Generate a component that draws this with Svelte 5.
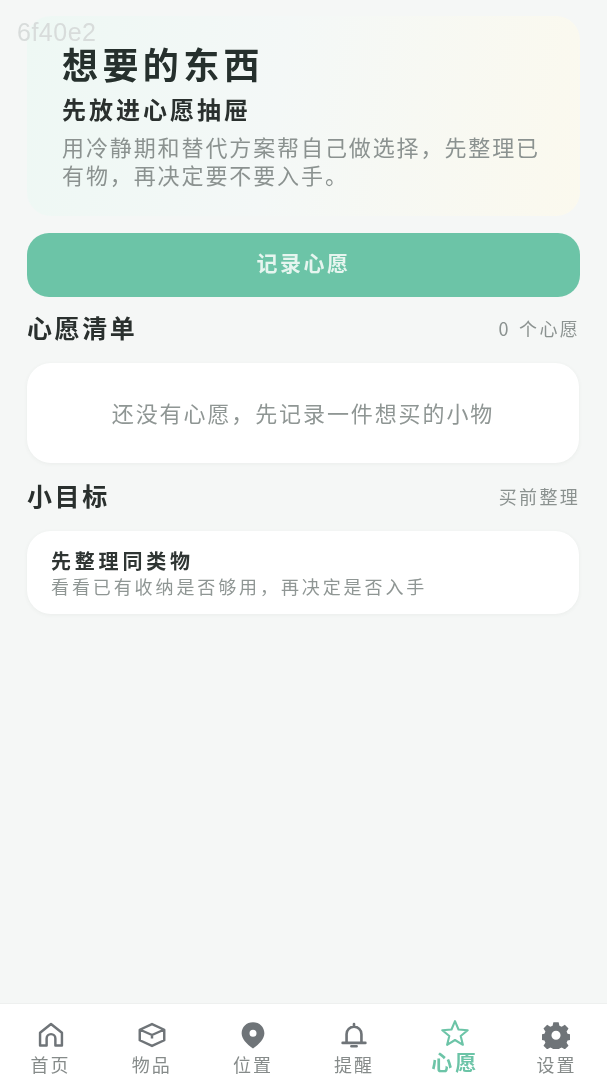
<script lang="ts">
  const tabs = [
    { id: 'home', label: '首页' },
    { id: 'items', label: '物品' },
    { id: 'place', label: '位置' },
    { id: 'bell', label: '提醒' },
    { id: 'wish', label: '心愿', active: true },
    { id: 'gear', label: '设置' }
  ];
</script>

<div class="page">
  <span class="build">6f40e2</span>

  <main class="content">
    <section class="hero">
      <h1>想要的东西</h1>
      <h2>先放进心愿抽屉</h2>
      <p>用冷静期和替代方案帮自己做选择，先整理已有物，再决定要不要入手。</p>
    </section>

    <button class="record">记录心愿</button>

    <div class="section-head first">
      <h3>心愿清单</h3>
      <span>0 个心愿</span>
    </div>
    <div class="card empty">还没有心愿，先记录一件想买的小物</div>

    <div class="section-head">
      <h3>小目标</h3>
      <span>买前整理</span>
    </div>
    <div class="card goal">
      <strong>先整理同类物</strong>
      <small>看看已有收纳是否够用，再决定是否入手</small>
    </div>
  </main>

  <nav class="tabbar">
    {#each tabs as tab}
      <div class="tab" class:active={tab.active}>
        <svg viewBox="0 0 32 32" width="32" height="32" aria-hidden="true">
          {#if tab.id === 'home'}
            <path d="M3.500 13.500 16 3.500l12.500 10V28H21V20a5 5 0 0 0-10 0v8H3.500Z" fill="none" stroke="currentColor" stroke-width="2.800" stroke-linejoin="round" />
          {:else if tab.id === 'items'}
            <path d="M16 3.500 30 10v12L16 28.500 2 22V10ZM2.500 10 16 16l13.500-6M16 16v4" fill="none" stroke="currentColor" stroke-width="2.800" stroke-linejoin="round" />
          {:else if tab.id === 'place'}
            <path fill-rule="evenodd" d="M16 1.500c7.500 0 13 5.500 13 12.500 0 6.500-5.500 12-13 17.500C8.500 26 3 20.500 3 14 3 7 8.500 1.500 16 1.500Zm0 8.500a4 4 0 1 0 0 8 4 4 0 0 0 0-8Z" fill="currentColor" />
          {:else if tab.id === 'bell'}
            <path d="M16 3.500v3M7.500 24.500V15a8.500 8.500 0 0 1 17 0v9.500M3 25h26M13 28.800h6" fill="none" stroke="currentColor" stroke-width="3" stroke-linecap="round" stroke-linejoin="round" />
          {:else if tab.id === 'wish'}
            <path d="M16 2.500 20 12 30.500 12.800 22.500 19.500 25 29.500 16 24 7 29.500 9.500 19.500 1.500 12.800 12 12Z" fill="none" stroke="currentColor" stroke-width="2.400" stroke-linejoin="round" />
          {:else}
            <path fill-rule="evenodd" d="M13 1.500h6l.9 4 2.600 1.100 3.600-2.200 4.200 4.200-2.200 3.400 1.100 2.500 4.300.9v6l-4.300.9-1.100 2.500 2.200 3.400-4.200 4.200-3.600-2.200-2.600 1.100-.9 4h-6l-.9-4-2.600-1.100-3.600 2.200-4.200-4.200 2.200-3.400-1.100-2.500-4.300-.9v-6l4.300-.9 1.100-2.500-2.200-3.400 4.200-4.200 3.600 2.200 2.600-1.100Zm3 9.500a5.200 5.200 0 1 0 0 10.400 5.200 5.200 0 0 0 0-10.400Z" fill="currentColor" />
          {/if}
        </svg>
        <span>{tab.label}</span>
      </div>
    {/each}
  </nav>
</div>

<style>
  :global(body) {
    margin: 0;
    background: #f5f7f6;
  }

  .page {
    position: relative;
    display: flex;
    flex-direction: column;
    min-height: 1080px;
    font-family: "Noto Sans CJK SC", "Noto Sans", sans-serif;
    color: #2a302e;
    overflow: hidden;
    filter: blur(0.6px);
  }

  .build {
    position: absolute;
    top: 20px;
    left: 17px;
    font-family: "Liberation Sans", sans-serif;
    font-size: 25px;
    line-height: 24px;
    letter-spacing: 0.5px;
    color: #d8dcdb;
  }

  .content {
    flex: 1;
    padding: 16px 27px 0;
  }

  .hero {
    height: 200px;
    box-sizing: border-box;
    padding: 27px 35px 0;
    border-radius: 24px;
    background: linear-gradient(100deg, #eef8f4 0%, #f4f8f7 45%, #fbf9ee 100%);
  }

  h1 {
    margin: 0;
    font-size: 36px;
    line-height: 40px;
    font-weight: 700;
    letter-spacing: 4.400px;
    color: #26302d;
  }

  h2 {
    margin: 11px 0 0;
    font-size: 24px;
    line-height: 30px;
    font-weight: 700;
    letter-spacing: 3px;
    color: #2a302e;
  }

  .hero p {
    margin: 8px 0 0;
    font-size: 22px;
    line-height: 28px;
    letter-spacing: 1.900px;
    color: #8b9290;
  }

  .record {
    display: block;
    width: 553px;
    height: 64px;
    margin-top: 17px;
    padding: 0 0 6px;
    border: 0;
    border-radius: 22px;
    background: #6cc4a7;
    color: #e6f5ef;
    font: inherit;
    font-size: 21px;
    font-weight: 700;
    letter-spacing: 2.500px;
  }

  .section-head {
    display: flex;
    align-items: center;
    justify-content: space-between;
    box-sizing: border-box;
    height: 34px;
    margin-top: 17px;
    padding-bottom: 3px;
  }

  .section-head.first {
    margin-top: 15px;
  }

  h3 {
    margin: 0;
    font-size: 25px;
    line-height: 31px;
    font-weight: 700;
    letter-spacing: 2.600px;
    color: #2a302e;
  }

  .section-head span {
    font-size: 18px;
    letter-spacing: 2.300px;
    word-spacing: 2px;
    color: #8b9290;
  }

  .card {
    box-sizing: border-box;
    width: 552px;
    margin-top: 17px;
    border-radius: 24px;
    background: #fff;
    box-shadow: 0 1px 4px rgba(60, 80, 70, 0.06);
  }

  .empty {
    display: flex;
    align-items: center;
    justify-content: center;
    height: 100px;
    padding-bottom: 2px;
    font-size: 22px;
    letter-spacing: 1.900px;
    color: #8f9694;
  }

  .goal {
    display: flex;
    flex-direction: column;
    height: 83px;
    padding: 18px 24px 0;
  }

  .goal strong {
    font-size: 20px;
    line-height: 24px;
    font-weight: 700;
    letter-spacing: 3.800px;
    color: #2f3533;
  }

  .goal small {
    margin-top: 1px;
    font-size: 18px;
    line-height: 24px;
    letter-spacing: 2.900px;
    color: #8f9694;
  }

  .tabbar {
    display: grid;
    grid-template-columns: repeat(6, 1fr);
    height: 76px;
    border-top: 1px solid #eef0ef;
    background: #fff;
  }

  .tab {
    display: flex;
    flex-direction: column;
    align-items: center;
    padding-top: 17px;
    color: #6f7478;
  }

  .tab svg {
    display: block;
    width: 28px;
    height: 28px;
  }

  .tab span {
    margin-top: 3px;
    font-size: 18px;
    line-height: 24px;
    letter-spacing: 2px;
    color: #868b8a;
  }

  .tab.active {
    color: #6cc4a7;
  }

  .tab.active svg {
    margin-top: -2px;
  }

  .tab.active span {
    margin-top: 2px;
    font-size: 21px;
    font-weight: 700;
    letter-spacing: 3px;
    color: #6cc4a7;
  }
</style>
